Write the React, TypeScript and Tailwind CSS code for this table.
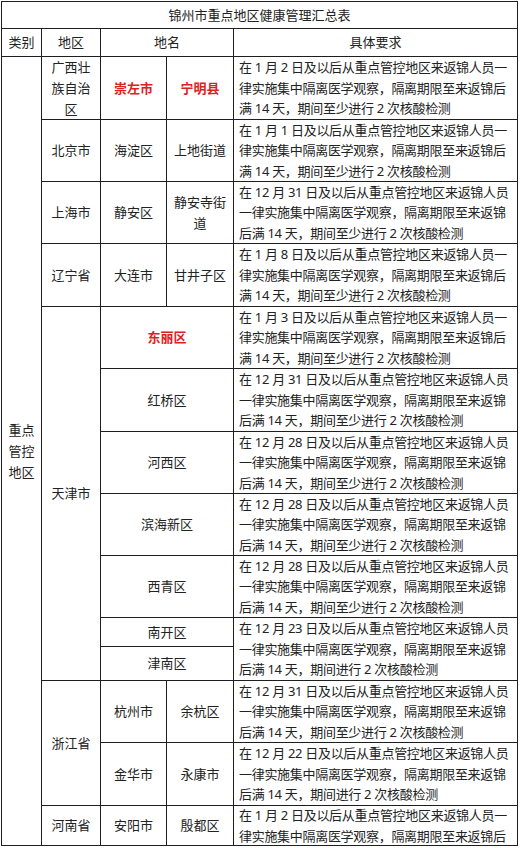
import React from "react";

type Req = { l1: string; l2: string; l3?: string };

// 1 月 x 日 rows wrap one char earlier than 12 月 xx 日 rows
const shortDate = (d: string, least = true): Req => ({
  l1: `在 1 月 ${d} 日及以后从重点管控地区来返锦人员一`,
  l2: "律实施集中隔离医学观察，隔离期限至来返锦后",
  l3: `满 14 天，期间${least ? "至少" : ""}进行 2 次核酸检测`,
});

const longDate = (d: string, least = true): Req => ({
  l1: `在 12 月 ${d} 日及以后从重点管控地区来返锦人员`,
  l2: "一律实施集中隔离医学观察，隔离期限至来返锦",
  l3: `后满 14 天，期间${least ? "至少" : ""}进行 2 次核酸检测`,
});

function Cell({ children, className = "" }: { children: React.ReactNode; className?: string }) {
  return (
    <div className={`bg-white flex items-center justify-center text-center px-[4px] leading-[21px] ${className}`}>
      {children}
    </div>
  );
}

function Red({ children, className = "" }: { children: React.ReactNode; className?: string }) {
  return (
    <Cell className={className}>
      <span className="font-bold text-[#dc221e]">{children}</span>
    </Cell>
  );
}

function ReqCell({ r, className = "" }: { r: Req; className?: string }) {
  return (
    <div className={`bg-white flex flex-col justify-center pl-[5px] leading-[20.5px] tracking-[-0.3px] whitespace-nowrap overflow-hidden ${className}`}>
      <div>{r.l1}</div>
      <div>{r.l2}</div>
      {r.l3 && <div>{r.l3}</div>}
    </div>
  );
}

export default function App() {
  return (
    <div className="min-h-[848px] bg-white pl-px pt-px text-[13px] text-[#222] font-['Noto_Sans','Noto_Sans_CJK_SC',sans-serif]">
      <div className="grid w-[517px] bg-[#1e1e1e] p-px gap-px grid-cols-[39px_58px_65px_66px_283px] grid-rows-[26px_27px_62px_61px_61px_62px_61px_62px_61px_61px_61px_28px_33px_61px_62px_39px]">
        <Cell className="col-span-5">锦州市重点地区健康管理汇总表</Cell>

        <Cell>类别</Cell>
        <Cell>地区</Cell>
        <Cell className="col-span-2">地名</Cell>
        <Cell>具体要求</Cell>

        <Cell className="row-span-14">重点管控地区</Cell>

        <Cell>广西壮族自治区</Cell>
        <Red>崇左市</Red>
        <Red>宁明县</Red>
        <ReqCell r={shortDate("2")} />

        <Cell>北京市</Cell>
        <Cell>海淀区</Cell>
        <Cell>上地街道</Cell>
        <ReqCell r={shortDate("1")} />

        <Cell>上海市</Cell>
        <Cell>静安区</Cell>
        <Cell>静安寺街道</Cell>
        <ReqCell r={longDate("31")} />

        <Cell>辽宁省</Cell>
        <Cell>大连市</Cell>
        <Cell>甘井子区</Cell>
        <ReqCell r={shortDate("8")} />

        <Cell className="row-span-7">天津市</Cell>
        <Red className="col-span-2">东丽区</Red>
        <ReqCell r={shortDate("3")} />

        <Cell className="col-span-2">红桥区</Cell>
        <ReqCell r={longDate("31")} />

        <Cell className="col-span-2">河西区</Cell>
        <ReqCell r={longDate("28")} />

        <Cell className="col-span-2">滨海新区</Cell>
        <ReqCell r={longDate("28")} />

        <Cell className="col-span-2">西青区</Cell>
        <ReqCell r={longDate("28")} />

        <Cell className="col-span-2">南开区</Cell>
        <ReqCell r={longDate("23", false)} className="row-span-2" />
        <Cell className="col-span-2">津南区</Cell>

        <Cell className="row-span-2">浙江省</Cell>
        <Cell>杭州市</Cell>
        <Cell>余杭区</Cell>
        <ReqCell r={longDate("31")} />

        <Cell>金华市</Cell>
        <Cell>永康市</Cell>
        <ReqCell r={longDate("22", false)} />

        <Cell>河南省</Cell>
        <Cell>安阳市</Cell>
        <Cell>殷都区</Cell>
        <ReqCell r={{ l1: shortDate("2").l1, l2: shortDate("2").l2 }} />
      </div>
    </div>
  );
}
